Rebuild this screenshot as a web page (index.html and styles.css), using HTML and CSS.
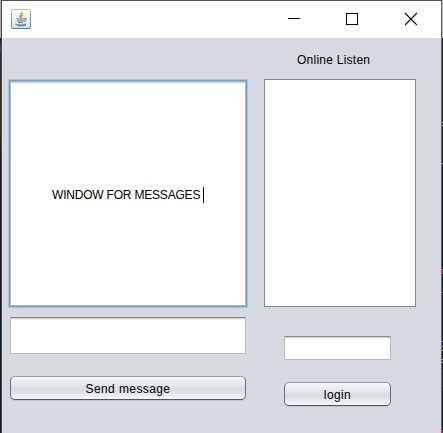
FILE: index.html
```html
<!DOCTYPE html>
<html lang="en">
<head>
<meta charset="utf-8">
<title>Chat</title>
<link rel="stylesheet" href="styles.css">
</head>
<body>
<div class="desktop">
  <div class="edge edge-left"></div>
  <main class="window">
    <header class="titlebar">
      <svg class="java" width="20" height="20" viewBox="0 0 20 20">
        <defs><linearGradient id="tile" x2="0" y2="1"><stop stop-color="#fff"/><stop offset="1" stop-color="#dce2e6"/></linearGradient>
        <linearGradient id="rim" x2="0" y2="1"><stop stop-color="#b4bcc2"/><stop offset="1" stop-color="#5c7a90"/></linearGradient></defs>
        <rect x=".5" y=".5" width="19" height="19" rx="1.5" fill="url(#tile)" stroke="url(#rim)"/>
        <path d="M11 3c1 2-3 3-2 5l1 1M12.2 5.5c-2 1-2.2 2-1 3.5" fill="none" stroke="#ee8c3c" stroke-width="1.4"/>
        <path d="M5.5 9.5q4 1.2 8 0M6 11.5q3.5 1.2 7 0M7 13.3q2.5 1 5 0M13 9.6c3-.8 2.6 2-.2 2.8M4 15q5 2 11 0M6 16.5q5 1 9-.3" fill="none" stroke="#66889e" stroke-width="1.1"/>
      </svg>
      <svg class="controls" width="130" height="14" viewBox="0 0 130 14" fill="none" stroke="#000" shape-rendering="crispEdges">
        <path d="M1 6.5h12M59.5 1.5h11v11h-11z"/>
        <path d="M118 1l12 12M130 1l-12 12" shape-rendering="auto" stroke-width="1.1"/>
      </svg>
    </header>
    <div class="content">
      <section class="messages">
        <div class="focus"><div class="pane"><span class="text">WINDOW FOR MESSAGES</span><i class="caret"></i></div></div>
        <div class="field compose"></div>
        <div class="button send"><span>Send message</span></div>
      </section>
      <section class="online">
        <div class="heading">Online Listen</div>
        <div class="list"></div>
        <div class="field name"></div>
        <div class="button login"><span>login</span></div>
      </section>
    </div>
  </main>
  <div class="edge edge-right"></div>
</div>
</body>
</html>
```
FILE: styles.css
```css
* { box-sizing: border-box; }
body { margin: 0; font: 12px/16px "Liberation Sans", Arial, sans-serif; color: #000; overflow: hidden; }
.desktop { display: flex; width: 443px; height: 433px; }
.edge { width: 1px; }
.edge-left { background: linear-gradient(#aaa 0 38px, #24242a 38px 45px, #223f7c 45px 53px, #28282d 53px 130px, #10182c 160px); }
.edge-right { background: linear-gradient(#bbb 0 38px, #242427 38px 122px, #bbb 122px 123px, #222 123px 125px, #bbb 125px 126px, #222 126px 163px, #bbb 163px 164px, #0b111c 164px 269px, #cc2365 269px 274px, #101520 274px 292px, #b018b0 292px 293px, #101520 293px 341px, #9299a8 341px 342px, #101520 342px 346px, #9299a8 346px 347px, #101520 347px 350px, #d3d316 350px 351px, #101520 351px 359px, #ccc 359px 360px, #101520 360px 362px, #ccc 362px 363px, #101520 363px 370px, #102b44 370px 387px, #101520 387px 430px, #b91855 430px); }
.window { width: 441px; border: solid #4b4b50; border-width: 1px 1px 0; background: #d6d9e0; }
.window { border-right-color: #66666a; }
.titlebar { display: flex; justify-content: space-between; height: 37px; padding: 8px 24px 0 9px; background: #fff; }
.controls { margin-top: 3px; }
.content { display: flex; height: 395px; padding-left: 6px; }
.messages { width: 240px; padding-top: 41px; }
.focus { height: 229px; border: 1px solid #a9c3df; border-radius: 1px; }
.pane { display: flex; align-items: center; height: 100%; border: 1px solid #6e9fcf; padding: 2px 0 0 42px; background: #fff; box-shadow: inset 0 0 0 1px #b5b5b8, inset 0 1px #8d8e93, inset 0 2px #d3d3d5, inset 0 3px #eee; }
.text { letter-spacing: -0.2px; }
.caret { width: 1px; height: 16px; margin-left: 3px; background: #000; }
.field { background: #fff; border: 1px solid #b7b8bc; border-top-color: #86878c; box-shadow: inset 0 1px #d0d0d3, inset 0 2px #efeff0; }
.compose { width: 236px; height: 37px; margin: 9px 0 0 2px; }
.button { display: flex; align-items: center; justify-content: center; height: 24px; border: 1px solid #6a6e77; border-top-color: #979aa2; border-bottom-color: #50545b; border-radius: 5px; background: linear-gradient(#f5f6f8, #dfe2e6 45%, #d7dadf 58%, #f4f7fc); box-shadow: 0 1px #c4c7cf; letter-spacing: 0.4px; padding-top: 2px; }
.send { width: 236px; margin: 22px 0 0 2px; }
.online { width: 152px; margin-left: 16px; padding-top: 14px; }
.heading { padding-left: 33px; height: 27px; letter-spacing: 0.25px; }
.list { height: 228px; border: 1px solid #828790; background: #fff; }
.name { width: 107px; height: 24px; margin: 29px 0 0 20px; }
.login { width: 107px; margin: 22px 0 0 20px; }
```
